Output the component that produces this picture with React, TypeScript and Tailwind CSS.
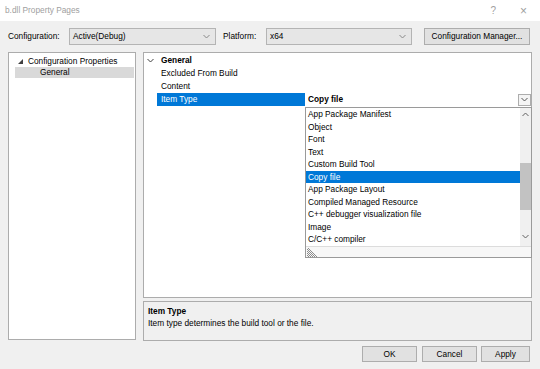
import React from "react";

const items = [
  "App Package Manifest",
  "Object",
  "Font",
  "Text",
  "Custom Build Tool",
  "Copy file",
  "App Package Layout",
  "Compiled Managed Resource",
  "C++ debugger visualization file",
  "Image",
  "C/C++ compiler",
];

function Chevron({ up = false, color = "#606060" }: { up?: boolean; color?: string }) {
  return (
    <svg width="7" height="5" viewBox="0 0 7 5" className={up ? "rotate-180" : ""}>
      <path d="M0.5 1 L3.5 4 L6.5 1" fill="none" stroke={color} strokeWidth="1" />
    </svg>
  );
}

function Combo({ label, width }: { label: string; width: string }) {
  return (
    <div className={`${width} h-[17px] border border-[#b4b4b4] bg-[#e6e6e6] flex items-center justify-between pl-[3px] pr-[5px]`}>
      <span>{label}</span>
      <Chevron color="#888" />
    </div>
  );
}

export default function App() {
  return (
    <div className="w-[540px] h-[369px] bg-[#f0f0f0] flex flex-col overflow-hidden text-[8.3px] text-black font-['Liberation_Sans',Arial,sans-serif]">
      {/* title bar */}
      <div className="h-[21px] bg-white flex items-center justify-between pl-[5px] pr-[13px] text-[#a0a0a0]">
        <span>b.dll Property Pages</span>
        <div className="flex items-center gap-[24px] text-[10px]">
          <span>?</span>
          <span className="text-[12px] font-light">×</span>
        </div>
      </div>

      {/* configuration row */}
      <div className="mt-[7px] h-[17px] flex items-center pl-[8px]">
        <span className="w-[61px]">Configuration:</span>
        <Combo label="Active(Debug)" width="w-[147px]" />
        <span className="ml-[7px] w-[43px]">Platform:</span>
        <Combo label="x64" width="w-[146px]" />
        <button className="ml-[12px] w-[106px] h-[17px] border border-[#adadad] bg-[#e1e1e1] flex items-center justify-center">
          Configuration Manager...
        </button>
      </div>

      {/* main */}
      <div className="mt-[7px] h-[289px] flex px-[8px] gap-[7px]">
        <div className="w-[128px] h-[288px] bg-white border border-[#acacac] pt-[2px] px-[6px]">
          <div className="h-[12px] flex items-center">
            <svg width="5" height="5" viewBox="0 0 5 5" className="ml-[3px] mr-[5px]">
              <polygon points="5,0 5,5 0,5" fill="#404040" />
            </svg>
            <span>Configuration Properties</span>
          </div>
          <div className="h-[11px] flex items-center bg-[#d9d9d9] pl-[25px] -mr-[5px]">General</div>
        </div>

        <div className="w-[389px] flex flex-col gap-[3px]">
          <div className="relative h-[246px] bg-white border border-[#acacac] pt-[1px]">
            <div className="h-[13px] flex items-center">
              <div className="w-[13px] flex justify-center">
                <Chevron color="#404040" />
              </div>
              <span className="pl-[4px] font-bold">General</span>
            </div>
            <div className="h-[13px] flex items-center pl-[17px]">Excluded From Build</div>
            <div className="h-[13px] flex items-center pl-[17px]">Content</div>
            <div className="h-[13px] flex items-center">
              <div className="ml-[13px] w-[148px] h-full bg-[#0078d7] text-white flex items-center pl-[4px]">Item Type</div>
              <div className="flex-1 h-full flex items-center justify-between pl-[3px] pr-[0px]">
                <span className="font-bold">Copy file</span>
                <div className="w-[13px] h-[12px] border border-[#adadad] bg-[#f4f4f4] flex items-center justify-center">
                  <Chevron color="#555" />
                </div>
              </div>
            </div>

            {/* dropdown list */}
            <div className="absolute left-[161px] top-[54px] w-[227px] h-[151px] bg-white border border-[#9a9a9a] flex flex-col">
              <div className="h-[138px] flex">
                <div className="flex-1 pt-[0px]">
                  {items.map((it) => (
                    <div
                      key={it}
                      className={`h-[12.5px] flex items-center pl-[2px] ${it === "Copy file" ? "bg-[#0078d7] text-white" : ""}`}
                    >
                      {it}
                    </div>
                  ))}
                </div>
                <div className="w-[11px] bg-[#f0f0f0] flex flex-col items-center">
                  <div className="h-[12px] flex items-center">
                    <Chevron up color="#606060" />
                  </div>
                  <div className="mt-[43px] w-[11px] h-[47px] bg-[#c2c2c2]" />
                  <div className="mt-[24px] flex items-center">
                    <Chevron color="#606060" />
                  </div>
                </div>
              </div>
              <div className="flex-1 border-t border-[#dcdcdc] bg-[#f7f7f7] flex items-end">
                <svg width="11" height="10" viewBox="0 0 11 10">
                  <path d="M1 2 L9 10 M1 4 L7 10 M1 6 L5 10 M1 8 L3 10 M2 1 L11 10" stroke="#707070" strokeWidth="0.8" />
                </svg>
              </div>
            </div>
          </div>

          <div className="flex-1 border border-[#acacac] bg-[#f0f0f0] pl-[4px] pt-[3px]">
            <div className="h-[12px] flex items-center font-bold">Item Type</div>
            <div className="h-[13px] flex items-center">Item type determines the build tool or the file.</div>
          </div>
        </div>
      </div>

      {/* buttons */}
      <div className="mt-[5px] h-[16px] flex justify-end pr-[10px]">
        <button className="w-[55px] h-full border border-[#adadad] bg-[#e1e1e1]">OK</button>
        <button className="ml-[5px] w-[55px] h-full border border-[#adadad] bg-[#e1e1e1]">Cancel</button>
        <button className="ml-[4px] w-[49px] h-full border border-[#adadad] bg-[#e1e1e1]">Apply</button>
      </div>
    </div>
  );
}
